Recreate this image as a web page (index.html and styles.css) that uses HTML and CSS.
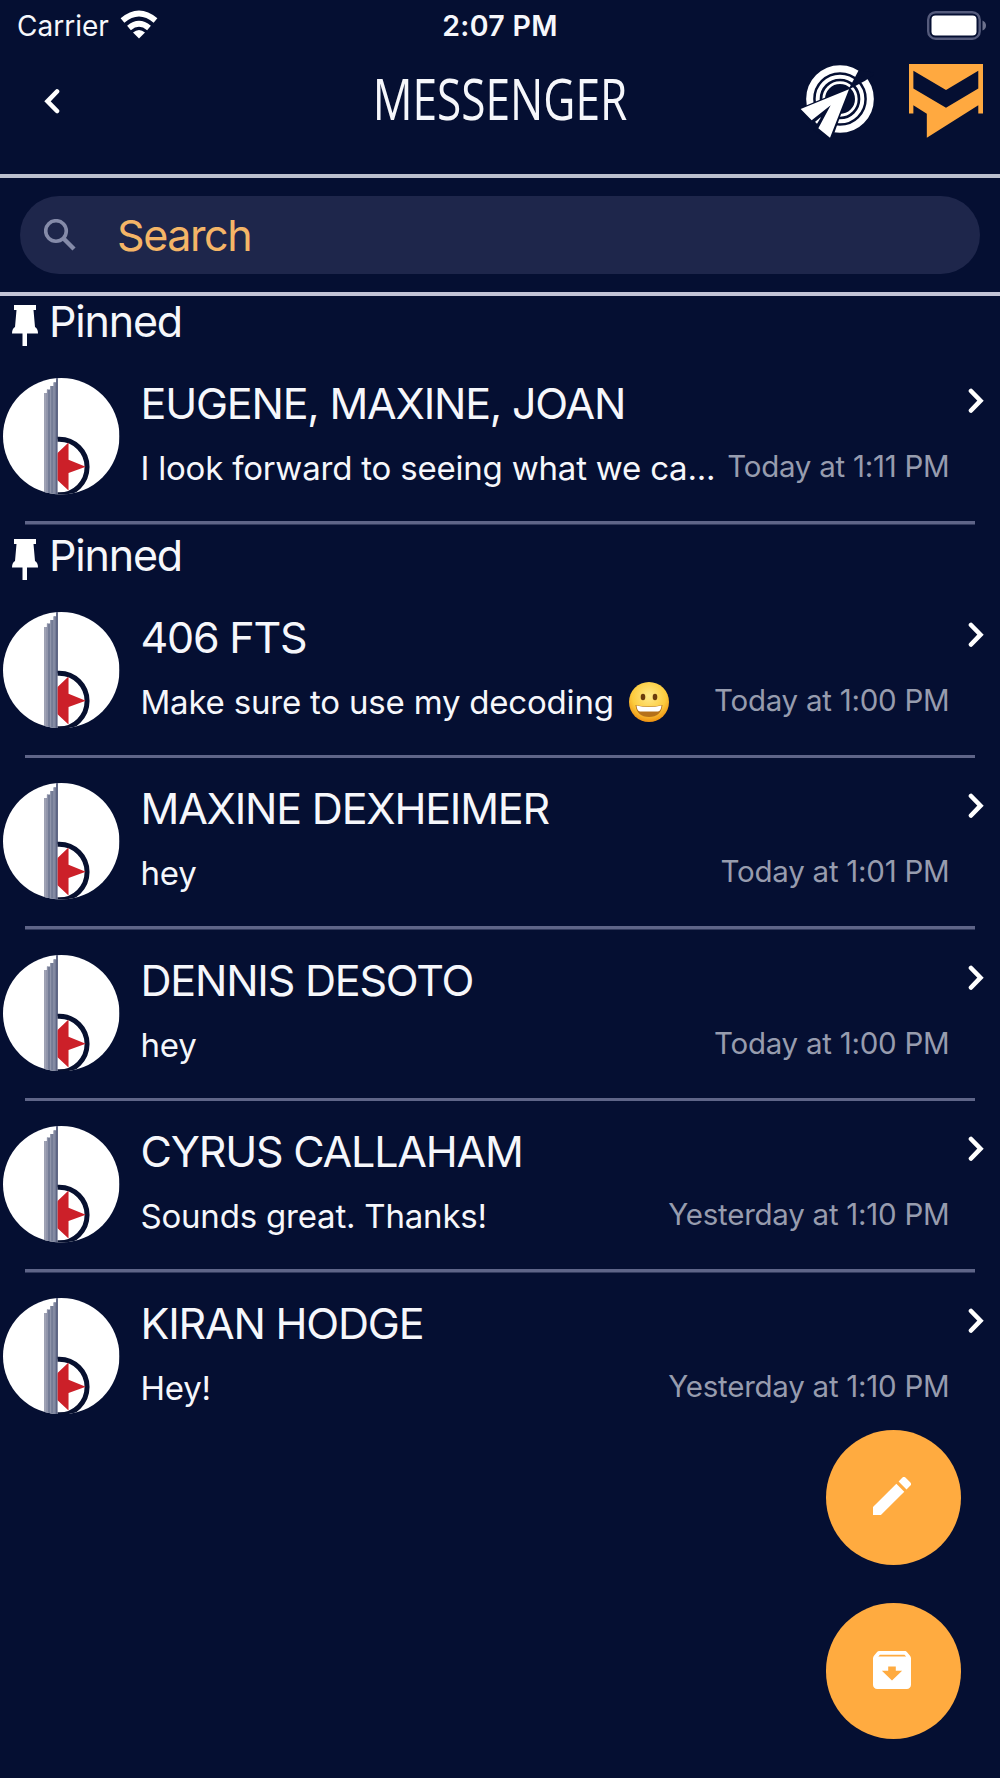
FILE: index.html
```html
<!DOCTYPE html>
<html lang="en">
<head>
    <meta charset="UTF-8">
    <meta name="viewport" content="width=device-width, initial-scale=1.0">
    <title>Messenger</title>
    <link rel="stylesheet" href="styles.css">
</head>
<body>
    <!-- shared icons -->
    <svg class="sprite" aria-hidden="true">
        <symbol id="chevron" viewBox="0 0 16 26">
            <path d="M3 3L12.5 12.7L3 22.5" fill="none" stroke="#fff" stroke-width="4.6" stroke-linecap="round"/>
        </symbol>
        <symbol id="pin" viewBox="0 0 26 42">
            <path d="M2 0h22v5h-2.5l1.5 17q3 1.500 3 6.500H15V41h-4.500V28.500H0q0-5 3-6.500L4.500 5H2z" fill="#fff"/>
        </symbol>
        <symbol id="avatar" viewBox="8 53 352 352">
            <clipPath id="round"><circle cx="184" cy="229" r="176"/></clipPath>
            <clipPath id="half"><path d="M173 220h120v200H173z"/></clipPath>
            <g clip-path="url(#round)">
                <path d="M8 53h352v352H8z" fill="#fff"/>
                <path d="M132 98h9V88h10V77h10V66h8V53h5v352h-42z" fill="#747c96"/>
                <path d="M132 98h8v307h-8z" fill="#a0a3b5"/>
                <path d="M142 88v317M152 77v328M162 67v338" stroke="#9599ae" stroke-width="3"/>
                <path d="M171 53v352" stroke="#5a6180" stroke-width="5"/>
                <g clip-path="url(#half)">
                    <circle cx="178" cy="322" r="84" fill="#fff" stroke="#07102f" stroke-width="15"/>
                    <path d="M206 248V300L258 321L206 340V393L160 350V292z" fill="#cc2029"/>
                </g>
            </g>
        </symbol>
    </svg>

    <div class="status-bar">
        <div class="carrier">
            <span>Carrier</span>
            <svg class="wifi" viewBox="0 0 38 29">
                <path d="M2.500 10.500Q19-3.500 35.500 10.500M9 18Q19 9.500 29 18" fill="none" stroke="#fff" stroke-width="5.800"/>
                <path d="M19 28.500l-6-6q6-5 12 0z" fill="#fff"/>
            </svg>
        </div>
        <span class="clock">2:07 PM</span>
        <svg class="battery" viewBox="0 0 60 30">
            <rect x="1.200" y="1.200" width="51.500" height="26.500" rx="7.500" fill="none" stroke="#555b7c" stroke-width="2.400"/>
            <rect x="4.500" y="4.500" width="45" height="20" rx="4" fill="#fff"/>
            <path d="M55.500 9.500q3.500 1.500 3.500 5t-3.500 5z" fill="#6d728e"/>
        </svg>
    </div>

    <header class="top-bar">
        <svg class="back"><use href="#chevron"/></svg>
        <h1>MESSENGER</h1>
        <div class="top-icons">
            <svg class="radar" viewBox="60 43 222 222">
                <g fill="none" stroke="#fff">
                    <circle cx="180" cy="148" r="91" stroke-width="21"/>
                    <circle cx="180" cy="148" r="67" stroke-width="12"/>
                    <circle cx="180" cy="148" r="49" stroke-width="8"/>
                </g>
                <path d="M205 120L236 62L290 70L254 94z" fill="#050f32"/>
                <path d="M212 112L52 178L95 225L125 200L100 240L150 275L163 250z" fill="#050f32"/>
                <path d="M207 119L62 178L95 212L152 167L115 236L150 264z" fill="#fff"/>
            </svg>
            <svg class="mail" viewBox="387 45 220 220">
                <path fill="#ffa940" fill-rule="evenodd" d="M387 45H607V192H593V168L440 264V193L400 168V192H387zM400 65V118L497 175L593 118V65L497 122z"/>
            </svg>
        </div>
    </header>

    <div class="search-bar">
        <label class="search">
            <svg class="search-icon" viewBox="0 0 32 32">
                <circle cx="12" cy="12" r="10.300" fill="none" stroke="#858ba9" stroke-width="3.600"/>
                <path d="M19 19L30 30" stroke="#858ba9" stroke-width="4.400"/>
            </svg>
            <span>Search</span>
        </label>
    </div>

    <main>
        <ul class="chats">
            <li class="chat">
                <div class="pinned"><svg><use href="#pin"/></svg><span>Pinned</span></div>
                <div class="row">
                    <svg class="avatar"><use href="#avatar"/></svg>
                    <div class="info">
                        <h2>EUGENE, MAXINE, JOAN</h2>
                        <div class="line">
                            <p>I look forward to seeing what we ca...</p>
                            <time>Today at 1:11 PM</time>
                        </div>
                    </div>
                    <svg class="more"><use href="#chevron"/></svg>
                </div>
            </li>
            <li class="chat">
                <div class="pinned"><svg><use href="#pin"/></svg><span>Pinned</span></div>
                <div class="row">
                    <svg class="avatar"><use href="#avatar"/></svg>
                    <div class="info">
                        <h2>406 FTS</h2>
                        <div class="line">
                            <p>Make sure to use my decoding
                                <svg class="emoji" viewBox="0 0 40 40">
                                    <defs>
                                        <radialGradient id="face" cx=".5" cy=".35" r=".65">
                                            <stop offset="0" stop-color="#ffe98a"/>
                                            <stop offset=".65" stop-color="#fccb3c"/>
                                            <stop offset="1" stop-color="#ee9112"/>
                                        </radialGradient>
                                    </defs>
                                    <circle cx="20" cy="20" r="20" fill="url(#face)"/>
                                    <ellipse cx="14" cy="15" rx="2.300" ry="3.200" fill="#6b3b0c"/>
                                    <ellipse cx="26" cy="15" rx="2.300" ry="3.200" fill="#6b3b0c"/>
                                    <path d="M6.500 23Q20 26 33.500 23Q32 35 20 35T6.500 23z" fill="#b5701a"/>
                                    <path d="M7.500 23.500Q20 26.500 32.500 23.500Q32 29 29 29.500H11Q8 29 7.500 23.500z" fill="#fff"/>
                                </svg>
                            </p>
                            <time>Today at 1:00 PM</time>
                        </div>
                    </div>
                    <svg class="more"><use href="#chevron"/></svg>
                </div>
            </li>
            <li class="chat">
                <div class="row">
                    <svg class="avatar"><use href="#avatar"/></svg>
                    <div class="info">
                        <h2>MAXINE DEXHEIMER</h2>
                        <div class="line">
                            <p>hey</p>
                            <time>Today at 1:01 PM</time>
                        </div>
                    </div>
                    <svg class="more"><use href="#chevron"/></svg>
                </div>
            </li>
            <li class="chat">
                <div class="row">
                    <svg class="avatar"><use href="#avatar"/></svg>
                    <div class="info">
                        <h2>DENNIS DESOTO</h2>
                        <div class="line">
                            <p>hey</p>
                            <time>Today at 1:00 PM</time>
                        </div>
                    </div>
                    <svg class="more"><use href="#chevron"/></svg>
                </div>
            </li>
            <li class="chat">
                <div class="row">
                    <svg class="avatar"><use href="#avatar"/></svg>
                    <div class="info">
                        <h2>CYRUS CALLAHAM</h2>
                        <div class="line">
                            <p>Sounds great. Thanks!</p>
                            <time>Yesterday at 1:10 PM</time>
                        </div>
                    </div>
                    <svg class="more"><use href="#chevron"/></svg>
                </div>
            </li>
            <li class="chat">
                <div class="row">
                    <svg class="avatar"><use href="#avatar"/></svg>
                    <div class="info">
                        <h2>KIRAN HODGE</h2>
                        <div class="line">
                            <p>Hey!</p>
                            <time>Yesterday at 1:10 PM</time>
                        </div>
                    </div>
                    <svg class="more"><use href="#chevron"/></svg>
                </div>
            </li>
        </ul>
    </main>

    <div class="actions">
        <button aria-label="New message">
            <svg viewBox="3 3 18 18"><path fill="#fff" d="M3 17.250V21h3.750L17.810 9.940l-3.750-3.750L3 17.250zM20.710 7.040a1 1 0 0 0 0-1.410l-2.340-2.340a1 1 0 0 0-1.410 0l-1.830 1.830 3.750 3.750 1.830-1.830z"/></svg>
        </button>
        <button aria-label="Archive">
            <svg viewBox="3 3 18 18"><path fill="#fff" fill-rule="evenodd" d="M20.540 5.230l-1.390-1.680C18.880 3.210 18.470 3 18 3H6c-.47 0-.88.21-1.160.55L3.460 5.230C3.170 5.570 3 6.020 3 6.500V19c0 1.100.9 2 2 2h14c1.100 0 2-.9 2-2V6.500c0-.48-.17-.93-.46-1.270zM12 17L7.200 12.400H10.200V10.400h3.600v2h3L12 17zM5.500 5.600l.8-.8h11.600l.8.800H5.500z"/></svg>
        </button>
    </div>
</body>
</html>
```
FILE: styles.css
```css
*{
    box-sizing: border-box;
    margin: 0;
    padding: 0;
}

body{
    position: relative;
    height: 1778px;
    overflow: hidden;
    font-family: Inter, Roboto, sans-serif;
    background-color: #050f32;
    color: #f6f7fb;
}

svg{
    display: block;
    flex-shrink: 0;
}

.sprite{
    position: absolute;
    width: 0;
    height: 0;
}

.status-bar{
    display: grid;
    grid-template-columns: 1fr auto 1fr;
    align-items: center;
    height: 50px;
    padding: 0 13px;
    font-size: 28px;
}

.carrier{
    display: flex;
    gap: 11px;
    height: 50px;
    margin-left: 4px;
    line-height: 51px;
}

.wifi{
    width: 38px;
    height: 29px;
    margin-top: 9px;
}

.clock{
    font-size: 28.5px;
    font-weight: 600;
    letter-spacing: .3px;
    line-height: 52px;
}

.battery{
    width: 60px;
    height: 30px;
    justify-self: end;
}

.top-bar{
    display: grid;
    grid-template-columns: 1fr auto 1fr;
    align-items: center;
    height: 127.5px;
    padding: 0 17px 21px;
    border-bottom: 4px solid #bcc0ce;
}

.back{
    width: 16px;
    height: 26px;
    margin-left: 27px;
    transform: rotate(180deg);
}

h1{
    font-family: "Open Sans", sans-serif;
    font-size: 57px;
    font-weight: 400;
    line-height: 74px;
    padding-bottom: 7px;
    width: 250px;
    display: flex;
    justify-content: center;
    transform: scaleX(.775);
}

.top-icons{
    display: flex;
    justify-content: flex-end;
    gap: 35px;
}

.radar{
    width: 74px;
    height: 74px;
}

.mail{
    width: 74px;
    height: 74px;
}

.search-bar{
    height: 118px;
    padding: 18px 20px 0;
    border-bottom: 4px solid #c3c4d6;
}

.search{
    display: flex;
    align-items: center;
    gap: 41px;
    height: 78px;
    padding-left: 24px;
    border-radius: 39px;
    background-color: #1e264b;
    color: #f4b567;
    font-size: 43px;
    letter-spacing: -1.4px;
}

.search-icon{
    width: 32px;
    height: 32px;
}

.chats{
    list-style: none;
    margin-top: -4.5px;
}

.pinned{
    display: flex;
    height: 62px;
    padding: 14px 0 0 12px;
    gap: 11px;
    font-size: 43px;
    line-height: 33px;
    letter-spacing: -1.2px;

    svg{
        width: 26px;
        height: 42px;
    }
}

.row{
    display: flex;
    height: 171.5px;
    padding: 25px 16px 0 3px;
    /* divider is inset on both sides */
    background: linear-gradient(#5f6588, #5f6588) 25px 100% / 950px 3.5px no-repeat;
}

.chat:last-child .row{
    background: none;
}

.avatar{
    width: 116.5px;
    height: 116.5px;
}

.info{
    width: 809px;
    margin-left: 21px;
}

h2{
    font-size: 43px;
    font-weight: 400;
    letter-spacing: -1.2px;
    line-height: 50px;
    white-space: nowrap;
}

.line{
    display: flex;
    justify-content: space-between;
    height: 50px;
    margin-top: 15px;
    line-height: 50px;
    white-space: nowrap;

    p{
        display: flex;
        align-items: center;
        gap: 15px;
        font-size: 33px;
        letter-spacing: -.2px;
    }

    time{
        font-size: 29.5px;
        letter-spacing: -.25px;
        line-height: 46px;
        color: #979cae;
    }
}

.emoji{
    width: 40px;
    height: 40px;
}

.more{
    width: 16px;
    height: 26px;
    margin: 10px 0 0 auto;
}

.actions{
    position: absolute;
    right: 39px;
    top: 1429.5px;
    display: flex;
    flex-direction: column;
    gap: 38px;

    button{
        display: grid;
        place-items: center;
        width: 135.5px;
        height: 135.5px;
        border: 0;
        border-radius: 50%;
        background-color: #ffab40;
    }

    svg{
        width: 38px;
        height: 38px;
        transform: translate(-1px, -1px);
    }
}
```
